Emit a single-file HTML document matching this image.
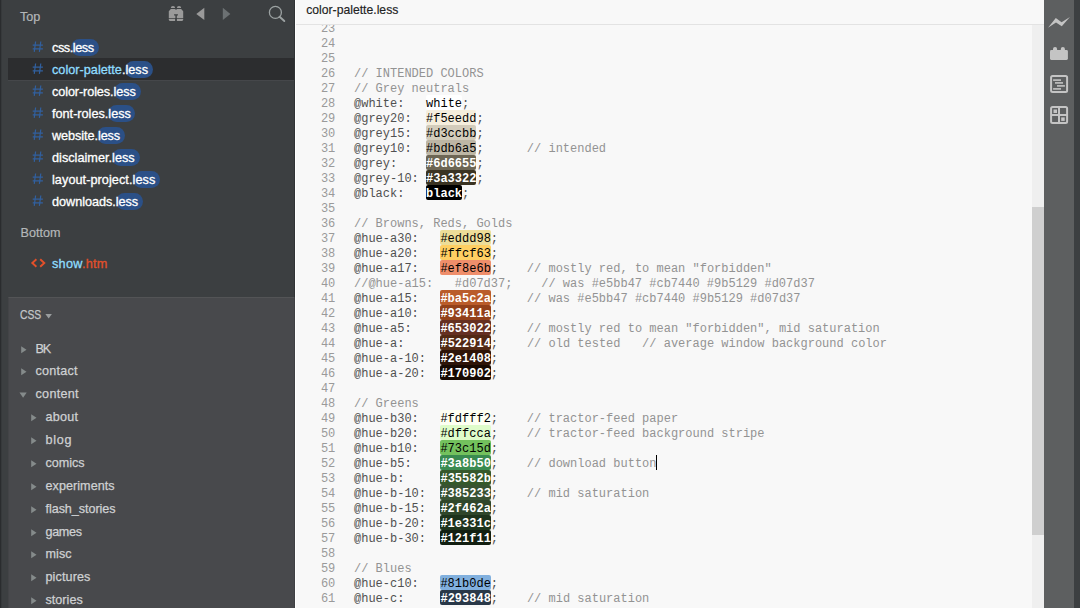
<!DOCTYPE html>
<html><head><meta charset="utf-8">
<style>
*{margin:0;padding:0;box-sizing:border-box}
html,body{width:1080px;height:608px;overflow:hidden;background:#f8f8f8}
body{position:relative;font-family:"Liberation Sans",sans-serif}
#side{position:absolute;left:0;top:0;width:295px;height:608px;background:#3c3f41;z-index:0;overflow:hidden}
#side .edge0{position:absolute;left:0;top:0;width:1px;height:608px;background:#2a2c2e}
#side .edge1{position:absolute;left:1px;top:0;width:1px;height:608px;background:#36393b}
#side .edgeR{position:absolute;left:294px;top:0;width:1px;height:608px;background:#303335}
.lbl{position:absolute;font-size:12.6px;line-height:16px;color:#b4b7b9;white-space:pre;-webkit-text-stroke:0.2px currentColor}
.wsrow{position:absolute;left:8px;width:286px;height:22px;z-index:0}
.wsrow.sel{background:#2c2d2f;box-sizing:content-box;border-bottom:1px solid #45474a}
.wsrow .hash{position:absolute;left:24px;top:0}
.wsrow .fn{position:absolute;left:44px;top:3.5px;font-size:12.7px;line-height:16px;color:#fff;white-space:pre;-webkit-text-stroke:0.3px currentColor}
.wsrow.sel .fn{color:#8fddff}
.pill{position:absolute;top:2.9px;height:16.85px;background:#2b5087;border-radius:8.5px}
#proj{position:absolute;left:8px;top:297px;width:287px;height:311px;background:#48494c;border-top:1px solid #535456;border-left:1px solid #434447}
#proj::after{content:"";position:absolute;right:0;top:-1px;width:1px;bottom:0;background:#3f4043}
.trow{position:absolute;font-size:12.6px;line-height:16px;color:#cfd1d3;white-space:pre;-webkit-text-stroke:0.25px currentColor}
.tri{position:absolute;-webkit-text-stroke:0}
#ed{position:absolute;left:295px;top:0;width:749px;height:608px;background:#f8f8f8;z-index:0;overflow:hidden}
#ed .wline{position:absolute;left:0;top:0;width:1px;height:608px;background:#ffffff}
#title{position:absolute;left:1px;top:0;width:748px;height:25px;background:#f8f8f8;border-bottom:1px solid #e3e3e3;z-index:2}
#title span{position:absolute;left:10.2px;top:2.1px;font-size:12.2px;line-height:16px;color:#222;-webkit-text-stroke:0.15px currentColor}
.ln{position:absolute;left:0;height:15px;width:740px;font-family:"Liberation Mono",monospace;font-size:12px;line-height:15px;white-space:pre}
.ln .no{position:absolute;left:0;width:40.3px;top:0;color:#9a9a9a;text-align:right}
.ln .code{position:absolute;left:59px;top:0;color:#505050}
.cm{color:#939393}
.vn{color:#505050}
.sw{position:relative;color:#000}
.sw::before{content:"";position:absolute;left:0;right:0;top:-2.5px;bottom:1.4px;border-radius:2px;background:var(--c);z-index:-1}
.sw.dk{color:#fff;font-weight:bold}
#track{position:absolute;left:737px;top:25px;width:12px;height:583px;background:#efefef}
#thumb{position:absolute;left:737px;top:207px;width:12px;height:328px;background:#cfcfcf}
#tb{position:absolute;left:1044px;top:0;width:30px;height:608px;background:#5d5f60}
#strip{position:absolute;left:1074px;top:0;width:6px;height:608px;background:#3c3f41}
</style></head><body>
<div id="side">
<div class="edge0"></div><div class="edge1"></div><div class="edgeR"></div>
<div class="lbl" style="left:20px;top:8.8px">Top</div>
<svg style="position:absolute;left:0;top:0" width="295" height="30">
 <g fill="#9a9a9a">
  <path d="M170.8 8.1 Q170.8 6 173 6 Q175.1 6 175.1 8.1 Z M176.9 8.1 Q176.9 6 179 6 Q181.2 6 181.2 8.1 Z"/>
  <path d="M170.8 9 L175.4 9 L175.4 9.8 L176.6 9.8 L176.6 9 L181.2 9 L183.2 11.2 L183.2 17.9 L176.8 17.9 L176.8 15.4 L177.9 15.4 L177.9 14.2 L174.1 14.2 L174.1 15.4 L175.4 15.4 L175.4 17.9 L168.8 17.9 L168.8 11.2 Z"/>
  <path d="M168.8 18.8 L175.1 18.8 L175.1 20.9 L170 20.9 Q168.8 20.9 168.8 19.8 Z M176.9 18.8 L183.2 18.8 L183.2 19.8 Q183.2 20.9 182 20.9 L176.9 20.9 Z"/>
  <path d="M204.3 7.8 L204.3 20.1 L196.3 14 Z"/>
 </g>
 <path d="M222.8 7.8 L222.8 20.1 L230.4 14 Z" fill="#6c7173"/>
 <circle cx="275.4" cy="12.4" r="6" fill="none" stroke="#9ca2a2" stroke-width="1.3"/>
 <path d="M279.6 16.8 L284.3 21" stroke="#9ca2a2" stroke-width="1.9" stroke-linecap="round"/>
</svg>
<div class="wsrow" style="top:36px"><svg class="hash" width="14" height="22"><path d="M3.6 5.5 L2.25 15.9 M8.8 5.5 L7.4 15.9 M0.7 9.2 H10.9 M0.7 12.8 H10.9" stroke="#31609f" stroke-width="1.2" fill="none"/></svg><div class="pill" style="left:62.50px;width:28.30px"></div><span class="fn" style="letter-spacing:-0.429px">css<span style="color:#fff">.less</span></span></div>
<div class="wsrow sel" style="top:58px"><svg class="hash" width="14" height="22"><path d="M3.6 5.5 L2.25 15.9 M8.8 5.5 L7.4 15.9 M0.7 9.2 H10.9 M0.7 12.8 H10.9" stroke="#31609f" stroke-width="1.2" fill="none"/></svg><div class="pill" style="left:117.30px;width:27.60px"></div><span class="fn" style="letter-spacing:0.006px">color-palette<span style="color:#fff">.less</span></span></div>
<div class="wsrow" style="top:80px"><svg class="hash" width="14" height="22"><path d="M3.6 5.5 L2.25 15.9 M8.8 5.5 L7.4 15.9 M0.7 9.2 H10.9 M0.7 12.8 H10.9" stroke="#31609f" stroke-width="1.2" fill="none"/></svg><div class="pill" style="left:105.60px;width:27.20px"></div><span class="fn" style="letter-spacing:-0.107px">color-roles<span style="color:#fff">.less</span></span></div>
<div class="wsrow" style="top:102px"><svg class="hash" width="14" height="22"><path d="M3.6 5.5 L2.25 15.9 M8.8 5.5 L7.4 15.9 M0.7 9.2 H10.9 M0.7 12.8 H10.9" stroke="#31609f" stroke-width="1.2" fill="none"/></svg><div class="pill" style="left:99.80px;width:27.00px"></div><span class="fn" style="letter-spacing:-0.007px">font-roles<span style="color:#fff">.less</span></span></div>
<div class="wsrow" style="top:124px"><svg class="hash" width="14" height="22"><path d="M3.6 5.5 L2.25 15.9 M8.8 5.5 L7.4 15.9 M0.7 9.2 H10.9 M0.7 12.8 H10.9" stroke="#31609f" stroke-width="1.2" fill="none"/></svg><div class="pill" style="left:89.00px;width:27.80px"></div><span class="fn" style="letter-spacing:-0.082px">website<span style="color:#fff">.less</span></span></div>
<div class="wsrow" style="top:146px"><svg class="hash" width="14" height="22"><path d="M3.6 5.5 L2.25 15.9 M8.8 5.5 L7.4 15.9 M0.7 9.2 H10.9 M0.7 12.8 H10.9" stroke="#31609f" stroke-width="1.2" fill="none"/></svg><div class="pill" style="left:104.20px;width:27.80px"></div><span class="fn" style="letter-spacing:0.014px">disclaimer<span style="color:#fff">.less</span></span></div>
<div class="wsrow" style="top:168px"><svg class="hash" width="14" height="22"><path d="M3.6 5.5 L2.25 15.9 M8.8 5.5 L7.4 15.9 M0.7 9.2 H10.9 M0.7 12.8 H10.9" stroke="#31609f" stroke-width="1.2" fill="none"/></svg><div class="pill" style="left:125.30px;width:26.40px"></div><span class="fn" style="letter-spacing:0.056px">layout-project<span style="color:#fff">.less</span></span></div>
<div class="wsrow" style="top:190px"><svg class="hash" width="14" height="22"><path d="M3.6 5.5 L2.25 15.9 M8.8 5.5 L7.4 15.9 M0.7 9.2 H10.9 M0.7 12.8 H10.9" stroke="#31609f" stroke-width="1.2" fill="none"/></svg><div class="pill" style="left:107.60px;width:27.20px"></div><span class="fn" style="letter-spacing:-0.046px">downloads<span style="color:#fff">.less</span></span></div>
<div class="lbl" style="left:20.5px;top:225px">Bottom</div>
<div class="wsrow" style="top:252px">
 <svg style="position:absolute;left:22px;top:5.5px" width="17" height="11"><path d="M6.4 1.2 L2.3 5 L6.4 8.8 M10.2 1.2 L14.3 5 L10.2 8.8" fill="none" stroke="#e3502a" stroke-width="1.9"/></svg>
 <span class="fn" style="color:#8fddff;letter-spacing:0.25px">show<span style="color:#e3502a">.htm</span></span>
</div>
<div id="proj">
 <div class="lbl" style="left:11px;top:8.8px;font-size:12.6px;color:#c3c6c8;-webkit-text-stroke:0.25px currentColor;transform:scaleX(0.82);transform-origin:0 0">CSS</div>
 <svg style="position:absolute;left:36px;top:15px" width="10" height="8"><path d="M0.4 0.9 L6.9 0.9 L3.65 5.4 Z" fill="#9a9d9e"/></svg>
</div>
<div class="trow" style="top:340.63px;left:35.5px"><svg class="tri" style="left:-15px;top:4px" width="8" height="10"><path d="M0.2 1.17 L5.5 4.77 L0.2 8.37 Z" fill="#858b8b"/></svg><span style="letter-spacing:-1.200px">BK</span></div>
<div class="trow" style="top:363.49px;left:35.5px"><svg class="tri" style="left:-15px;top:4px" width="8" height="10"><path d="M0.2 1.17 L5.5 4.77 L0.2 8.37 Z" fill="#858b8b"/></svg><span style="letter-spacing:0.250px">contact</span></div>
<div class="trow" style="top:386.35px;left:35.5px"><svg class="tri" style="left:-17px;top:5px" width="10" height="8"><path d="M0.5 1.5 L7.7 1.5 L4.1 6.8 Z" fill="#858b8b"/></svg><span style="letter-spacing:0.300px">content</span></div>
<div class="trow" style="top:409.21px;left:45.5px"><svg class="tri" style="left:-15px;top:4px" width="8" height="10"><path d="M0.2 1.17 L5.5 4.77 L0.2 8.37 Z" fill="#858b8b"/></svg><span style="letter-spacing:0.225px">about</span></div>
<div class="trow" style="top:432.07px;left:45.5px"><svg class="tri" style="left:-15px;top:4px" width="8" height="10"><path d="M0.2 1.17 L5.5 4.77 L0.2 8.37 Z" fill="#858b8b"/></svg><span style="letter-spacing:0.700px">blog</span></div>
<div class="trow" style="top:454.93px;left:45.5px"><svg class="tri" style="left:-15px;top:4px" width="8" height="10"><path d="M0.2 1.17 L5.5 4.77 L0.2 8.37 Z" fill="#858b8b"/></svg><span style="letter-spacing:-0.020px">comics</span></div>
<div class="trow" style="top:477.79px;left:45.5px"><svg class="tri" style="left:-15px;top:4px" width="8" height="10"><path d="M0.2 1.17 L5.5 4.77 L0.2 8.37 Z" fill="#858b8b"/></svg><span style="letter-spacing:0.050px">experiments</span></div>
<div class="trow" style="top:500.65px;left:45.5px"><svg class="tri" style="left:-15px;top:4px" width="8" height="10"><path d="M0.2 1.17 L5.5 4.77 L0.2 8.37 Z" fill="#858b8b"/></svg><span style="letter-spacing:-0.058px">flash_stories</span></div>
<div class="trow" style="top:523.51px;left:45.5px"><svg class="tri" style="left:-15px;top:4px" width="8" height="10"><path d="M0.2 1.17 L5.5 4.77 L0.2 8.37 Z" fill="#858b8b"/></svg><span style="letter-spacing:-0.325px">games</span></div>
<div class="trow" style="top:546.37px;left:45.5px"><svg class="tri" style="left:-15px;top:4px" width="8" height="10"><path d="M0.2 1.17 L5.5 4.77 L0.2 8.37 Z" fill="#858b8b"/></svg><span style="letter-spacing:0.067px">misc</span></div>
<div class="trow" style="top:569.23px;left:45.5px"><svg class="tri" style="left:-15px;top:4px" width="8" height="10"><path d="M0.2 1.17 L5.5 4.77 L0.2 8.37 Z" fill="#858b8b"/></svg><span style="letter-spacing:0.114px">pictures</span></div>
<div class="trow" style="top:592.09px;left:45.5px"><svg class="tri" style="left:-15px;top:4px" width="8" height="10"><path d="M0.2 1.17 L5.5 4.77 L0.2 8.37 Z" fill="#858b8b"/></svg><span style="letter-spacing:0.017px">stories</span></div>
</div>
<div id="ed">
<div class="wline"></div>
<div id="title"><span>color-palette.less</span></div>
<div class="ln" style="top:22.10px"><span class="no">23</span><span class="code"></span></div>
<div class="ln" style="top:37.10px"><span class="no">24</span><span class="code"></span></div>
<div class="ln" style="top:52.10px"><span class="no">25</span><span class="code"></span></div>
<div class="ln" style="top:67.10px"><span class="no">26</span><span class="code"><span class="cm">// INTENDED COLORS</span></span></div>
<div class="ln" style="top:82.10px"><span class="no">27</span><span class="code"><span class="cm">// Grey neutrals</span></span></div>
<div class="ln" style="top:97.10px"><span class="no">28</span><span class="code"><span class="vn">@white:</span>   <span class="sw lt" style="--c:white">white</span><span class="vn">;</span></span></div>
<div class="ln" style="top:112.10px"><span class="no">29</span><span class="code"><span class="vn">@grey20:</span>  <span class="sw lt" style="--c:#f5eedd">#f5eedd</span><span class="vn">;</span></span></div>
<div class="ln" style="top:127.10px"><span class="no">30</span><span class="code"><span class="vn">@grey15:</span>  <span class="sw lt" style="--c:#d3ccbb">#d3ccbb</span><span class="vn">;</span></span></div>
<div class="ln" style="top:142.10px"><span class="no">31</span><span class="code"><span class="vn">@grey10:</span>  <span class="sw lt" style="--c:#bdb6a5">#bdb6a5</span><span class="vn">;      </span><span class="cm">// intended</span></span></div>
<div class="ln" style="top:157.10px"><span class="no">32</span><span class="code"><span class="vn">@grey:</span>    <span class="sw dk" style="--c:#6d6655">#6d6655</span><span class="vn">;</span></span></div>
<div class="ln" style="top:172.10px"><span class="no">33</span><span class="code"><span class="vn">@grey-10:</span> <span class="sw dk" style="--c:#3a3322">#3a3322</span><span class="vn">;</span></span></div>
<div class="ln" style="top:187.10px"><span class="no">34</span><span class="code"><span class="vn">@black:</span>   <span class="sw dk" style="--c:black">black</span><span class="vn">;</span></span></div>
<div class="ln" style="top:202.10px"><span class="no">35</span><span class="code"></span></div>
<div class="ln" style="top:217.10px"><span class="no">36</span><span class="code"><span class="cm">// Browns, Reds, Golds</span></span></div>
<div class="ln" style="top:232.10px"><span class="no">37</span><span class="code"><span class="vn">@hue-a30:</span>   <span class="sw lt" style="--c:#eddd98">#eddd98</span><span class="vn">;</span></span></div>
<div class="ln" style="top:247.10px"><span class="no">38</span><span class="code"><span class="vn">@hue-a20:</span>   <span class="sw lt" style="--c:#ffcf63">#ffcf63</span><span class="vn">;</span></span></div>
<div class="ln" style="top:262.10px"><span class="no">39</span><span class="code"><span class="vn">@hue-a17:</span>   <span class="sw lt" style="--c:#ef8e6b">#ef8e6b</span><span class="vn">;    </span><span class="cm">// mostly red, to mean &quot;forbidden&quot;</span></span></div>
<div class="ln" style="top:277.10px"><span class="no">40</span><span class="code"><span class="cm">//@hue-a15:   #d07d37;    // was #e5bb47 #cb7440 #9b5129 #d07d37</span></span></div>
<div class="ln" style="top:292.10px"><span class="no">41</span><span class="code"><span class="vn">@hue-a15:</span>   <span class="sw dk" style="--c:#ba5c2a">#ba5c2a</span><span class="vn">;    </span><span class="cm">// was #e5bb47 #cb7440 #9b5129 #d07d37</span></span></div>
<div class="ln" style="top:307.10px"><span class="no">42</span><span class="code"><span class="vn">@hue-a10:</span>   <span class="sw dk" style="--c:#93411a">#93411a</span><span class="vn">;</span></span></div>
<div class="ln" style="top:322.10px"><span class="no">43</span><span class="code"><span class="vn">@hue-a5:</span>    <span class="sw dk" style="--c:#653022">#653022</span><span class="vn">;    </span><span class="cm">// mostly red to mean &quot;forbidden&quot;, mid saturation</span></span></div>
<div class="ln" style="top:337.10px"><span class="no">44</span><span class="code"><span class="vn">@hue-a:</span>     <span class="sw dk" style="--c:#522914">#522914</span><span class="vn">;    </span><span class="cm">// old tested   // average window background color</span></span></div>
<div class="ln" style="top:352.10px"><span class="no">45</span><span class="code"><span class="vn">@hue-a-10:</span>  <span class="sw dk" style="--c:#2e1408">#2e1408</span><span class="vn">;</span></span></div>
<div class="ln" style="top:367.10px"><span class="no">46</span><span class="code"><span class="vn">@hue-a-20:</span>  <span class="sw dk" style="--c:#170902">#170902</span><span class="vn">;</span></span></div>
<div class="ln" style="top:382.10px"><span class="no">47</span><span class="code"></span></div>
<div class="ln" style="top:397.10px"><span class="no">48</span><span class="code"><span class="cm">// Greens</span></span></div>
<div class="ln" style="top:412.10px"><span class="no">49</span><span class="code"><span class="vn">@hue-b30:</span>   <span class="sw lt" style="--c:#fdfff2">#fdfff2</span><span class="vn">;    </span><span class="cm">// tractor-feed paper</span></span></div>
<div class="ln" style="top:427.10px"><span class="no">50</span><span class="code"><span class="vn">@hue-b20:</span>   <span class="sw lt" style="--c:#dffcca">#dffcca</span><span class="vn">;    </span><span class="cm">// tractor-feed background stripe</span></span></div>
<div class="ln" style="top:442.10px"><span class="no">51</span><span class="code"><span class="vn">@hue-b10:</span>   <span class="sw lt" style="--c:#73c15d">#73c15d</span><span class="vn">;</span></span></div>
<div class="ln" style="top:457.10px"><span class="no">52</span><span class="code"><span class="vn">@hue-b5:</span>    <span class="sw dk" style="--c:#3a8b50">#3a8b50</span><span class="vn">;    </span><span class="cm">// download button</span><span style="position:absolute;left:301.6px;top:-2.1px;width:1.4px;height:15px;background:#000"></span></span></div>
<div class="ln" style="top:472.10px"><span class="no">53</span><span class="code"><span class="vn">@hue-b:</span>     <span class="sw dk" style="--c:#35582b">#35582b</span><span class="vn">;</span></span></div>
<div class="ln" style="top:487.10px"><span class="no">54</span><span class="code"><span class="vn">@hue-b-10:</span>  <span class="sw dk" style="--c:#385233">#385233</span><span class="vn">;    </span><span class="cm">// mid saturation</span></span></div>
<div class="ln" style="top:502.10px"><span class="no">55</span><span class="code"><span class="vn">@hue-b-15:</span>  <span class="sw dk" style="--c:#2f462a">#2f462a</span><span class="vn">;</span></span></div>
<div class="ln" style="top:517.10px"><span class="no">56</span><span class="code"><span class="vn">@hue-b-20:</span>  <span class="sw dk" style="--c:#1e331c">#1e331c</span><span class="vn">;</span></span></div>
<div class="ln" style="top:532.10px"><span class="no">57</span><span class="code"><span class="vn">@hue-b-30:</span>  <span class="sw dk" style="--c:#121f11">#121f11</span><span class="vn">;</span></span></div>
<div class="ln" style="top:547.10px"><span class="no">58</span><span class="code"></span></div>
<div class="ln" style="top:562.10px"><span class="no">59</span><span class="code"><span class="cm">// Blues</span></span></div>
<div class="ln" style="top:577.10px"><span class="no">60</span><span class="code"><span class="vn">@hue-c10:</span>   <span class="sw lt" style="--c:#81b0de">#81b0de</span><span class="vn">;</span></span></div>
<div class="ln" style="top:592.10px"><span class="no">61</span><span class="code"><span class="vn">@hue-c:</span>     <span class="sw dk" style="--c:#293848">#293848</span><span class="vn">;    </span><span class="cm">// mid saturation</span></span></div>
<div id="track"></div><div id="thumb"></div>
</div>
<div id="tb">
<svg width="30" height="130" style="position:absolute;left:0;top:0">
 <path d="M4 27.8 L11.8 18.1 L17.6 22.3 L25.9 17.1 L17.8 26.3 L12 22.6 Z" fill="#c4c4c4"/>
 <g fill="#c4c4c4">
  <rect x="6" y="50.1" width="17.9" height="9.8" rx="1.3"/>
  <rect x="9" y="46.9" width="4.1" height="5" rx="2"/>
  <rect x="16.8" y="46.9" width="4.1" height="5" rx="2"/>
 </g>
 <rect x="7.1" y="75.9" width="16" height="16" rx="1.5" fill="none" stroke="#c4c4c4" stroke-width="2"/>
 <g fill="#c4c4c4">
  <rect x="9.1" y="79.3" width="7.9" height="1.6"/>
  <rect x="11" y="82.1" width="8" height="1.6"/>
  <rect x="13" y="85.1" width="7.9" height="1.6"/>
  <rect x="9.1" y="88.1" width="7.9" height="1.6"/>
 </g>
 <rect x="7.1" y="107" width="16" height="16.1" rx="1.5" fill="none" stroke="#c4c4c4" stroke-width="2"/>
 <path d="M15 107 V123 M7 115 H23" stroke="#c4c4c4" stroke-width="2"/>
 <rect x="9.5" y="109.5" width="3.5" height="3.5" fill="#c4c4c4"/>
 <rect x="17.2" y="117.4" width="3.5" height="3.5" fill="#c4c4c4"/>
</svg>
</div>
<div id="strip"></div>
</body></html>
